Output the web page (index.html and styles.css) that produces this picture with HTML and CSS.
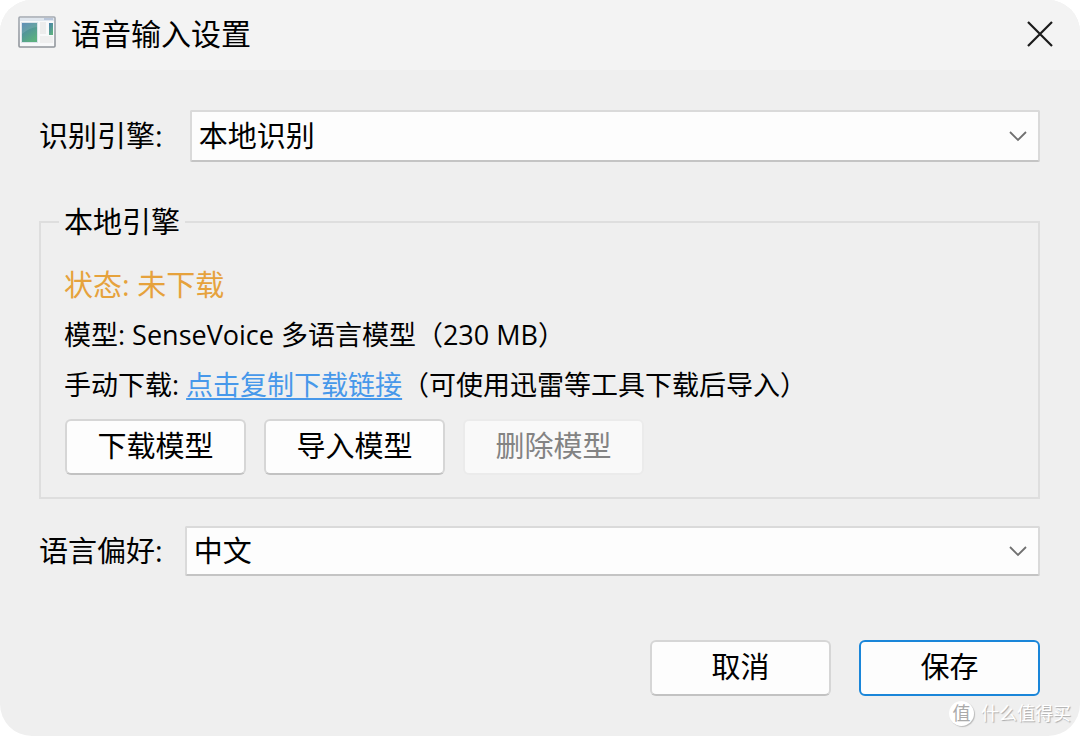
FILE: index.html
```html
<!DOCTYPE html>
<html lang="zh-CN">
<head>
    <meta charset="UTF-8">
    <meta name="viewport" content="width=device-width, initial-scale=1.0">
    <title>语音输入设置</title>
    <link rel="stylesheet" href="styles.css">
</head>
<body>
    <div class="dialog">
        <header class="titlebar">
            <svg class="app-icon" width="38" height="32" viewBox="0 0 38 32" aria-hidden="true">
                <defs>
                    <linearGradient id="pane" x1="0" y1="0" x2="0.6" y2="1">
                        <stop offset="0" stop-color="#4a7fae"/>
                        <stop offset="1" stop-color="#5cb080"/>
                    </linearGradient>
                    <linearGradient id="frame" x1="0" y1="0" x2="0" y2="1">
                        <stop offset="0" stop-color="#a3a9b1"/>
                        <stop offset="1" stop-color="#90959b"/>
                    </linearGradient>
                </defs>
                <rect x="1" y="1" width="36" height="30" rx="1" fill="#f8f9fa" stroke="url(#frame)" stroke-width="1.6"/>
                <rect x="2" y="2" width="34" height="3" fill="#dfe6ee"/>
                <rect x="26" y="2" width="9" height="2" fill="#b9c6da"/>
                <rect x="3" y="6" width="17" height="21" fill="#dbe3ea"/>
                <rect x="4" y="7" width="15" height="19" fill="url(#pane)"/>
                <path d="M4 7H19V11Q11 12 4 18Z" fill="#fff" opacity="0.12"/>
                <rect x="22" y="6" width="6" height="12" fill="#ececec"/>
                <rect x="22" y="20" width="13" height="7" fill="#efefef"/>
                <rect x="31" y="7" width="4" height="12" fill="url(#pane)"/>
            </svg>
            <h1>语音输入设置</h1>
            <button class="close" type="button" aria-label="关闭">
                <svg width="26" height="26" viewBox="0 0 26 26" aria-hidden="true">
                    <path d="M1 1L25 25M25 1L1 25" fill="none" stroke="#1a1a1a" stroke-width="2.2"/>
                </svg>
            </button>
        </header>

        <form class="content">
            <div class="row row-engine">
                <label for="engine">识别引擎:</label>
                <div class="combo">
                    <select id="engine">
                        <option>本地识别</option>
                    </select>
                    <svg class="arrow" width="20" height="12" viewBox="0 0 20 12" aria-hidden="true">
                        <path d="M2 2L10 10L18 2" fill="none" stroke="#707070" stroke-width="1.8"/>
                    </svg>
                </div>
            </div>

            <fieldset>
                <legend>本地引擎</legend>
                <p class="status">状态: 未下载</p>
                <p class="info">模型: SenseVoice 多语言模型（230 MB）</p>
                <p class="info">手动下载: <a href="#">点击复制下载链接</a>（可使用迅雷等工具下载后导入）</p>
                <div class="model-buttons">
                    <button class="btn" type="button">下载模型</button>
                    <button class="btn" type="button">导入模型</button>
                    <button class="btn" type="button" disabled>删除模型</button>
                </div>
            </fieldset>

            <div class="row row-language">
                <label for="language">语言偏好:</label>
                <div class="combo">
                    <select id="language">
                        <option>中文</option>
                    </select>
                    <svg class="arrow" width="20" height="12" viewBox="0 0 20 12" aria-hidden="true">
                        <path d="M2 2L10 10L18 2" fill="none" stroke="#707070" stroke-width="1.8"/>
                    </svg>
                </div>
            </div>

            <div class="footer">
                <button class="btn" type="button">取消</button>
                <button class="btn primary" type="submit">保存</button>
            </div>
        </form>

        <div class="watermark">
            <span class="badge">值</span>
            <span>什么值得买</span>
        </div>
    </div>
</body>
</html>
```
FILE: styles.css
```css
* {
    box-sizing: border-box;
}
body {
    margin: 0;
    background-color: #fff;
    color: #000;
    font-family: "Open Sans", "Noto Sans CJK SC", sans-serif;
    font-size: 29px;
    line-height: 40px;
}
.dialog {
    position: relative;
    min-height: 100vh;
    background-color: #efefef;
    border-radius: 32px;
    overflow: hidden;
}

/* title bar */
.titlebar {
    display: flex;
    align-items: center;
    height: 70px;
    padding: 0 27px 2px 18px;
    background-color: #f3f3f3;
}
.app-icon {
    margin-right: 15px;
    margin-bottom: 4px;
}
.titlebar h1 {
    flex: 1;
    margin: 0;
    font-size: 30px;
    font-weight: 400;
}
.close {
    display: flex;
    padding: 0;
    border: none;
    background: none;
    cursor: pointer;
}

/* form */
.content {
    padding: 40px 40px 40px 39px;
}
.row {
    display: flex;
    align-items: center;
}
.row-engine {
    gap: 27px;
}
.row-language {
    gap: 22px;
    margin-top: 27px;
}
.combo {
    position: relative;
    flex: 1;
}
.combo select {
    display: block;
    width: 100%;
    height: 52px;
    padding: 0 40px 0 7px;
    appearance: none;
    border: 2px solid #dadada;
    border-bottom-color: #c4c4c4;
    border-radius: 2px;
    background-color: #fdfdfd;
    color: #000;
    font: inherit;
}
.row-language select {
    height: 50px;
}
.arrow {
    position: absolute;
    top: 50%;
    right: 12px;
    margin-top: -6px;
    pointer-events: none;
}
fieldset {
    min-width: 0;
    margin: 40px 0 0;
    padding: 18px 24px 22px 23px;
    border: 2px solid #dedede;
}
legend {
    margin-left: -5px;
    padding: 0 5px;
}
fieldset p {
    margin: 0;
    line-height: 50px;
}
.status {
    color: #e6a23c;
}
.info {
    font-size: 27px;
}
.info a {
    color: #4798ea;
    text-underline-offset: 3px;
}
.model-buttons {
    display: flex;
    gap: 18px;
    margin-top: 9px;
    padding-left: 1px;
}

/* buttons */
.btn {
    width: 181px;
    height: 56px;
    padding: 0 0 2px;
    border: 2px solid #d6d6d6;
    border-bottom-color: #c2c2c2;
    border-radius: 6px;
    background-color: #fdfdfd;
    color: #000;
    font: inherit;
}
.btn:disabled {
    border-color: #ebebeb;
    background-color: #f9f9f9;
    color: #838383;
}
.btn.primary {
    border-color: #1a86d9;
}
.footer {
    display: flex;
    justify-content: flex-end;
    gap: 28px;
    margin-top: 64px;
}

.watermark {
    position: absolute;
    right: 9px;
    bottom: 10px;
    display: flex;
    align-items: center;
    gap: 7px;
    color: #fff;
    font-size: 18px;
    line-height: 26px;
    text-shadow: 1px 1px 1px #aaa;
}
.badge {
    width: 25px;
    height: 25px;
    border-radius: 50%;
    background-color: #fff;
    box-shadow: 1px 1px 1px #bbb;
    color: #aaa;
    line-height: 24px;
    text-align: center;
    text-shadow: none;
}
```
